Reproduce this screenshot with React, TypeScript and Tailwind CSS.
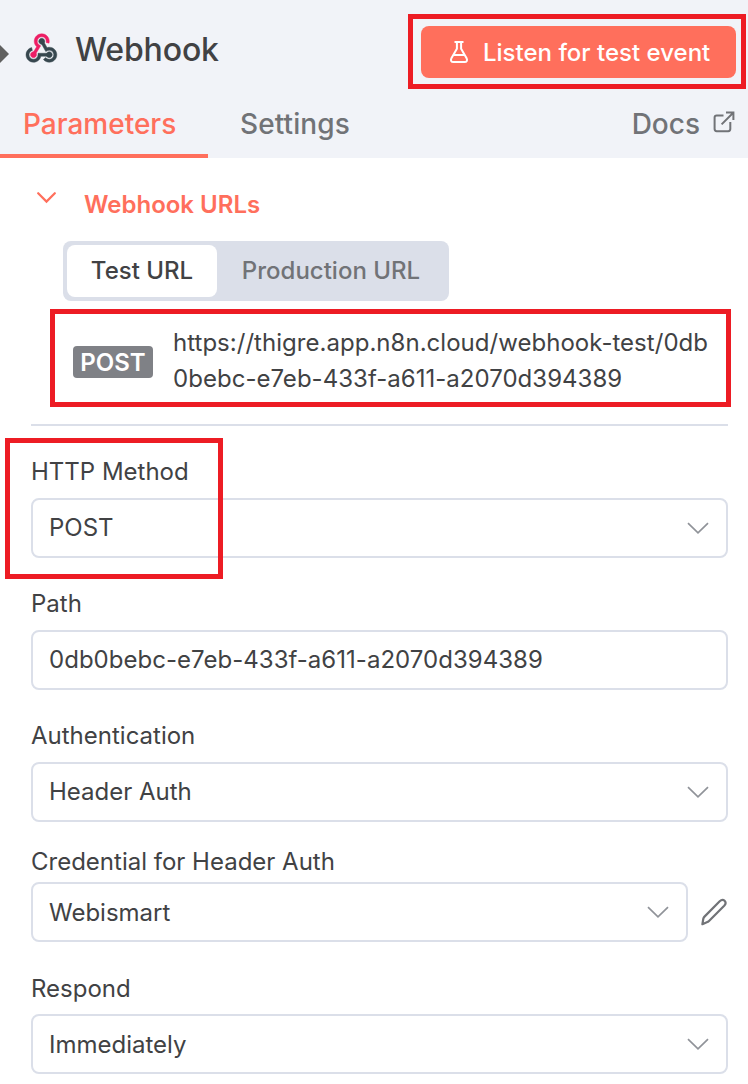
import React, { ReactNode } from 'react'

function WebhookLogo() {
  return (
    <svg className="mb-2 ml-[14px] h-[36px] w-[36px] shrink-0" viewBox="0 0 48 48" strokeWidth="0.6">
      <g fill="#37474f" stroke="#37474f">
        <path d="M35 37c-2.2 0-4-1.8-4-4s1.8-4 4-4 4 1.8 4 4-1.8 4-4 4z" />
        <path d="M35 43c-3 0-5.9-1.4-7.8-3.7l3.1-2.5c1.1 1.4 2.9 2.3 4.7 2.3 3.3 0 6-2.7 6-6s-2.7-6-6-6c-1 0-2 .3-2.9.7l-1.7 1L23.3 16l3.5-1.9 5.3 9.4c1-.3 2-.5 3-.5 5.5 0 10 4.5 10 10S40.5 43 35 43z" />
        <path d="M14 43C8.5 43 4 38.5 4 33c0-4.6 3.1-8.5 7.5-9.7l1 3.9C9.9 27.9 8 30.3 8 33c0 3.3 2.7 6 6 6s6-2.7 6-6v-2h15v4H23.8c-.9 4.6-5 8-9.8 8z" />
        <path d="M25 19c-2.2 0-4-1.8-4-4s1.8-4 4-4 4 1.8 4 4-1.8 4-4 4z" />
      </g>
      <g fill="#ed1e65" stroke="#ed1e65">
        <path d="M14 37c-2.2 0-4-1.8-4-4s1.8-4 4-4 4 1.8 4 4-1.8 4-4 4z" />
        <path d="M15.7 34l-3.4-2 5.9-9.7c-2-1.9-3.2-4.5-3.2-7.3 0-5.5 4.5-10 10-10s10 4.5 10 10c0 .9-.1 1.7-.3 2.5l-3.9-1c.1-.5.2-1 .2-1.5 0-3.3-2.7-6-6-6s-6 2.7-6 6c0 2.1 1.1 4 2.9 5.1l1.7 1L15.7 34z" />
      </g>
    </svg>
  )
}

function FlaskIcon() {
  return (
    <svg className="h-6 w-5 shrink-0" viewBox="0 0 20 24" fill="none" stroke="#fff" strokeWidth="2">
      <path d="M5.5 2h9M7.9 2v6.7L2.4 18.3c-1.1 2-.1 3.7 2 3.7h11.2c2.1 0 3.1-1.7 2-3.7L12.1 8.7V2" />
      <path d="M5 15h10" />
    </svg>
  )
}

function ExternalIcon() {
  return (
    <svg className="mb-1 ml-[13px] h-[22px] w-[22px]" viewBox="0 0 22 22" fill="none" stroke="#717377" strokeWidth="2">
      <path d="M10.5 4.4H3.7c-1.4 0-2.1.7-2.1 2.1v11.6c0 1.4.7 2.1 2.1 2.1h11.5c1.4 0 2.1-.7 2.1-2.1V11" />
      <path d="M13 1.6h7.4V9M20.2 1.8L8.6 13.4" />
    </svg>
  )
}

function PencilIcon() {
  return (
    <svg className="ml-3 h-[28px] w-[28px] shrink-0" viewBox="0 0 28 28" fill="none" stroke="#717377" strokeWidth="2.2" strokeLinejoin="round">
      <path d="M2.4 26.2l.9-5.4c.2-.9.6-1.6 1.2-2.2L19.7 3.2c1.7-1.6 3.6-1.7 4.9-.4s1.2 3.2-.4 4.9L9 23c-.6.6-1.3 1-2.2 1.3l-4.4 1.9z" />
    </svg>
  )
}

function Chevron() {
  return (
    <svg className="h-3 w-[22px] shrink-0" viewBox="0 0 22 12" fill="none" stroke="#909399" strokeWidth="1.7">
      <path d="M1 1.2l10 9.6 10-9.6" />
    </svg>
  )
}

function Field({ label, value, select, labelClass, valueClass, children }: {
  label: string
  value: string
  select?: boolean
  labelClass: string
  valueClass?: string
  children?: ReactNode
}) {
  return (
    <div>
      <div className={labelClass}>{label}</div>
      <div className="flex items-center">
        <div className="flex h-[60px] flex-1 items-center justify-between rounded-lg border-2 border-[#dbdfe9] bg-white pl-4 pr-[17px]">
          <span className={valueClass}>{value}</span>
          {select && <Chevron />}
        </div>
        {children}
      </div>
    </div>
  )
}

export default function App() {
  return (
    <div className="relative h-[1084px] w-[748px] overflow-hidden bg-white font-['Inter',sans-serif] text-[24px] leading-9 text-[#414244]">
      <header className="flex h-[158px] flex-col bg-[#f1f3f8]">
        <div className="flex h-[100px] items-center pr-3 pt-1">
          <svg className="mt-1 h-[18px] w-[9px] shrink-0" viewBox="0 0 9 18">
            <path d="M0 0l9 9-9 9z" fill="#606060" />
          </svg>
          <WebhookLogo />
          <h1 className="mb-1 ml-4 flex-1 text-[32px] font-medium tracking-[-0.15px]">Webhook</h1>
          <button className="flex h-[52px] w-[315px] items-center rounded-lg bg-[#ff6f5c] pl-7 font-medium text-white">
            <FlaskIcon />
            <span className="ml-[14px] mt-0.5">Listen for test event</span>
          </button>
        </div>
        <nav className="flex h-[58px] text-[28px] font-medium text-[#717377]">
          <div className="w-[208px] border-b-4 border-[#ff6f5c] pl-[23px] pt-1.5 text-[#ff6f5c]">Parameters</div>
          <div className="flex-1 pl-8 pt-1.5 tracking-[0.1px]">Settings</div>
          <div className="flex h-12 items-center pr-[13px]">
            Docs
            <ExternalIcon />
          </div>
        </nav>
      </header>

      <main className="pl-[31px] pr-5">
        <div className="flex pt-7">
          <svg className="ml-1.5 mt-1.5 h-3 w-[19px]" viewBox="0 0 19 12" fill="none" stroke="#ff6f5c" strokeWidth="2.2">
            <path d="M1.2 1.2l8.3 8.4 8.3-8.4" strokeLinecap="round" />
          </svg>
          <h2 className="ml-7 mt-px font-semibold text-[#ff6f5c]">Webhook URLs</h2>
        </div>

        <div className="ml-8 mt-[18px] flex h-[60px] w-[386px] rounded-lg bg-[#dbdfe9] p-1 font-medium">
          <div className="flex w-[150px] items-center justify-center rounded-lg bg-white">Test URL</div>
          <div className="flex flex-1 items-center justify-center text-[#717377]">Production URL</div>
        </div>

        <div className="ml-[42px] mt-6 flex h-[72px] items-center">
          <span className="mt-[1px] flex h-8 w-20 items-center justify-center rounded bg-[#7f8186] pt-0.5 font-semibold text-white">POST</span>
          <p className="ml-5 tracking-[0.03px]">
            https://thigre.app.n8n.cloud/webhook-test/0db
            <br />
            0bebc-e7eb-433f-a611-a2070d394389
          </p>
        </div>

        <hr className="mt-[27px] border-t-2 border-[#dbdfe9]" />

        <Field label="HTTP Method" value="POST" select labelClass="mt-7 mb-2" />
        <Field label="Path" value="0db0bebc-e7eb-433f-a611-a2070d394389" labelClass="mt-7 mb-2" valueClass="tracking-[0.03px]" />
        <Field label="Authentication" value="Header Auth" select labelClass="mt-7 mb-2" />
        <Field label="Credential for Header Auth" value="Webismart" select labelClass="mt-[22px] mb-0.5" valueClass="mt-0.5">
          <PencilIcon />
        </Field>
        <Field label="Respond" value="Immediately" select labelClass="mt-[29px] mb-[7px]" valueClass="mt-0.5" />
      </main>

      {/* highlight frames */}
      <div className="absolute left-[408px] top-[14px] h-[75px] w-[338px] border-5 border-[#ed1c24]" />
      <div className="absolute left-[50px] top-[309px] h-[98px] w-[681px] border-5 border-[#ed1c24]" />
      <div className="absolute left-[5px] top-[438px] h-[141px] w-[218px] border-5 border-[#ed1c24]" />
    </div>
  )
}
